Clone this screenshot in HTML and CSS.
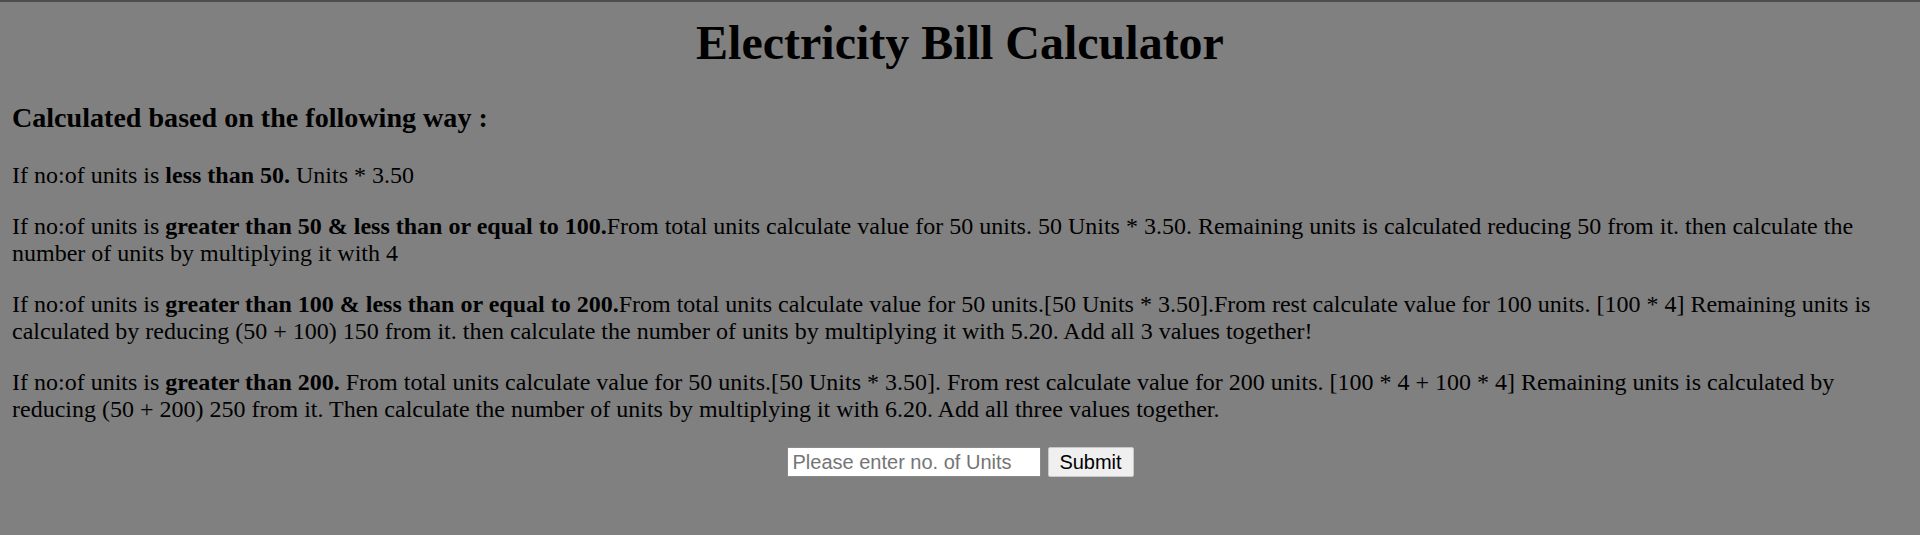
FILE: index.html
```html
<!DOCTYPE html>
<html lang="en">
<head>
<meta charset="utf-8">
<title>Electricity Bill Calculator</title>
<link rel="stylesheet" href="styles.css">
</head>
<body>
<div class="page">
  <h1 class="title">Electricity Bill Calculator</h1>
  <h3 class="subtitle">Calculated based on the following way :</h3>
  <p class="rule">If no:of units is <b>less than 50.</b> Units * 3.50</p>
  <p class="rule">If no:of units is <b>greater than 50 &amp; less than or equal to 100.</b>From total units calculate value for 50 units. 50 Units * 3.50. Remaining units is calculated reducing 50 from it. then calculate the number of units by multiplying it with 4</p>
  <p class="rule">If no:of units is <b>greater than 100 &amp; less than or equal to 200.</b>From total units calculate value for 50 units.[50 Units * 3.50].From rest calculate value for 100 units. [100 * 4] Remaining units is calculated by reducing (50 + 100) 150 from it. then calculate the number of units by multiplying it with 5.20. Add all 3 values together!</p>
  <p class="rule">If no:of units is <b>greater than 200.</b> From total units calculate value for 50 units.[50 Units * 3.50]. From rest calculate value for 200 units. [100 * 4 + 100 * 4] Remaining units is calculated by reducing (50 + 200) 250 from it. Then calculate the number of units by multiplying it with 6.20. Add all three values together.</p>
  <form class="calc-form" onsubmit="return false;">
    <input class="units-input" type="text" placeholder="Please enter no. of Units">
    <button class="submit-btn" type="submit">Submit</button>
  </form>
</div>
</body>
</html>
```
FILE: styles.css
```css
html, body {
  margin: 0;
  padding: 0;
  background: #808080;
}
body {
  border-top: 2px solid #4d4d4d;
  font-family: "Liberation Serif", "Times New Roman", serif;
  font-size: 24px;
  color: #000;
  min-height: 533px;
}
.page {
  padding: 13px 12px 12px;
}
.title {
  font-size: 48px;
  font-weight: bold;
  text-align: center;
  margin: 0 0 32px;
}
.subtitle {
  font-size: 28.08px;
  font-weight: bold;
  margin: 0 0 28px;
}
.rule {
  margin: 0 0 24px;
  line-height: normal;
}
.calc-form {
  display: flex;
  justify-content: center;
  align-items: center;
  gap: 7px;
  margin: 0;
}
.units-input {
  box-sizing: border-box;
  width: 254px;
  height: 30px;
  padding: 0 5px;
  border: 1px solid #8a8a8a;
  background: #fff;
  font-family: "Liberation Sans", Arial, sans-serif;
  font-size: 20px;
  color: #000;
  margin: 0;
  outline: none;
}
.units-input::placeholder {
  color: #757575;
}
.submit-btn {
  box-sizing: border-box;
  width: 86px;
  height: 30px;
  padding: 0;
  margin: 0;
  border: 1px solid #c8c8c8;
  border-radius: 2px;
  background: #efefef;
  font-family: "Liberation Sans", Arial, sans-serif;
  font-size: 20px;
  color: #000;
}
```
